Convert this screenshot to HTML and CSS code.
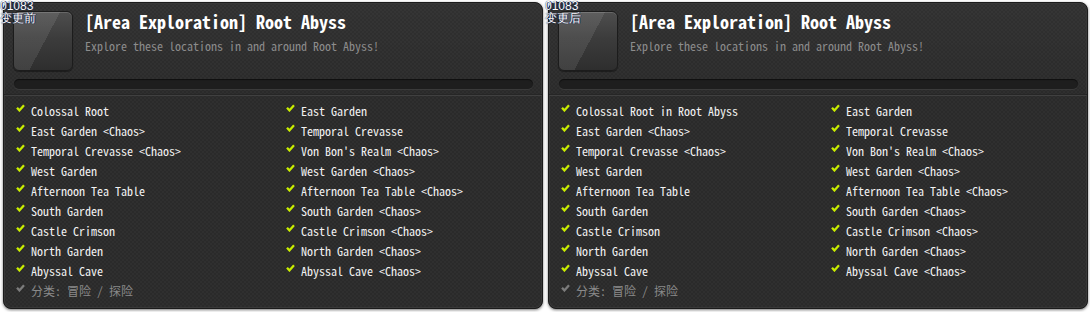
FILE: index.html
```html
<!DOCTYPE html>
<html>
<head>
<meta charset="utf-8">
<link rel="stylesheet" href="styles.css">
</head>
<body>
<div class="board">
  <div class="panel">
    <div class="tag"><div>01083</div><div>变更前</div></div>
    <div class="head">
      <div class="icon"></div>
      <div class="htext">
        <div class="title">[Area Exploration] Root Abyss</div>
        <div class="sub">Explore these locations in and around Root Abyss!</div>
      </div>
    </div>
    <div class="bar"></div>
    <div class="sep"></div>
    <ul class="list">
      <li><span class="chk"><svg viewBox="0 0 9 8" width="9" height="8"><polyline points="1,3.8 3.4,6.4 8,1.2"/></svg></span>Colossal Root</li>
      <li><span class="chk"><svg viewBox="0 0 9 8" width="9" height="8"><polyline points="1,3.8 3.4,6.4 8,1.2"/></svg></span>East Garden</li>
      <li><span class="chk"><svg viewBox="0 0 9 8" width="9" height="8"><polyline points="1,3.8 3.4,6.4 8,1.2"/></svg></span>East Garden &lt;Chaos&gt;</li>
      <li><span class="chk"><svg viewBox="0 0 9 8" width="9" height="8"><polyline points="1,3.8 3.4,6.4 8,1.2"/></svg></span>Temporal Crevasse</li>
      <li><span class="chk"><svg viewBox="0 0 9 8" width="9" height="8"><polyline points="1,3.8 3.4,6.4 8,1.2"/></svg></span>Temporal Crevasse &lt;Chaos&gt;</li>
      <li><span class="chk"><svg viewBox="0 0 9 8" width="9" height="8"><polyline points="1,3.8 3.4,6.4 8,1.2"/></svg></span>Von Bon's Realm &lt;Chaos&gt;</li>
      <li><span class="chk"><svg viewBox="0 0 9 8" width="9" height="8"><polyline points="1,3.8 3.4,6.4 8,1.2"/></svg></span>West Garden</li>
      <li><span class="chk"><svg viewBox="0 0 9 8" width="9" height="8"><polyline points="1,3.8 3.4,6.4 8,1.2"/></svg></span>West Garden &lt;Chaos&gt;</li>
      <li><span class="chk"><svg viewBox="0 0 9 8" width="9" height="8"><polyline points="1,3.8 3.4,6.4 8,1.2"/></svg></span>Afternoon Tea Table</li>
      <li><span class="chk"><svg viewBox="0 0 9 8" width="9" height="8"><polyline points="1,3.8 3.4,6.4 8,1.2"/></svg></span>Afternoon Tea Table &lt;Chaos&gt;</li>
      <li><span class="chk"><svg viewBox="0 0 9 8" width="9" height="8"><polyline points="1,3.8 3.4,6.4 8,1.2"/></svg></span>South Garden</li>
      <li><span class="chk"><svg viewBox="0 0 9 8" width="9" height="8"><polyline points="1,3.8 3.4,6.4 8,1.2"/></svg></span>South Garden &lt;Chaos&gt;</li>
      <li><span class="chk"><svg viewBox="0 0 9 8" width="9" height="8"><polyline points="1,3.8 3.4,6.4 8,1.2"/></svg></span>Castle Crimson</li>
      <li><span class="chk"><svg viewBox="0 0 9 8" width="9" height="8"><polyline points="1,3.8 3.4,6.4 8,1.2"/></svg></span>Castle Crimson &lt;Chaos&gt;</li>
      <li><span class="chk"><svg viewBox="0 0 9 8" width="9" height="8"><polyline points="1,3.8 3.4,6.4 8,1.2"/></svg></span>North Garden</li>
      <li><span class="chk"><svg viewBox="0 0 9 8" width="9" height="8"><polyline points="1,3.8 3.4,6.4 8,1.2"/></svg></span>North Garden &lt;Chaos&gt;</li>
      <li><span class="chk"><svg viewBox="0 0 9 8" width="9" height="8"><polyline points="1,3.8 3.4,6.4 8,1.2"/></svg></span>Abyssal Cave</li>
      <li><span class="chk"><svg viewBox="0 0 9 8" width="9" height="8"><polyline points="1,3.8 3.4,6.4 8,1.2"/></svg></span>Abyssal Cave &lt;Chaos&gt;</li>
      <li class="cat"><span class="chk"><svg viewBox="0 0 9 8" width="9" height="8"><polyline points="1,3.8 3.4,6.4 8,1.2"/></svg></span>分类: 冒险 / 探险</li>
    </ul>
  </div>
  <div class="panel">
    <div class="tag"><div>01083</div><div>变更后</div></div>
    <div class="head">
      <div class="icon"></div>
      <div class="htext">
        <div class="title">[Area Exploration] Root Abyss</div>
        <div class="sub">Explore these locations in and around Root Abyss!</div>
      </div>
    </div>
    <div class="bar"></div>
    <div class="sep"></div>
    <ul class="list">
      <li><span class="chk"><svg viewBox="0 0 9 8" width="9" height="8"><polyline points="1,3.8 3.4,6.4 8,1.2"/></svg></span>Colossal Root in Root Abyss</li>
      <li><span class="chk"><svg viewBox="0 0 9 8" width="9" height="8"><polyline points="1,3.8 3.4,6.4 8,1.2"/></svg></span>East Garden</li>
      <li><span class="chk"><svg viewBox="0 0 9 8" width="9" height="8"><polyline points="1,3.8 3.4,6.4 8,1.2"/></svg></span>East Garden &lt;Chaos&gt;</li>
      <li><span class="chk"><svg viewBox="0 0 9 8" width="9" height="8"><polyline points="1,3.8 3.4,6.4 8,1.2"/></svg></span>Temporal Crevasse</li>
      <li><span class="chk"><svg viewBox="0 0 9 8" width="9" height="8"><polyline points="1,3.8 3.4,6.4 8,1.2"/></svg></span>Temporal Crevasse &lt;Chaos&gt;</li>
      <li><span class="chk"><svg viewBox="0 0 9 8" width="9" height="8"><polyline points="1,3.8 3.4,6.4 8,1.2"/></svg></span>Von Bon's Realm &lt;Chaos&gt;</li>
      <li><span class="chk"><svg viewBox="0 0 9 8" width="9" height="8"><polyline points="1,3.8 3.4,6.4 8,1.2"/></svg></span>West Garden</li>
      <li><span class="chk"><svg viewBox="0 0 9 8" width="9" height="8"><polyline points="1,3.8 3.4,6.4 8,1.2"/></svg></span>West Garden &lt;Chaos&gt;</li>
      <li><span class="chk"><svg viewBox="0 0 9 8" width="9" height="8"><polyline points="1,3.8 3.4,6.4 8,1.2"/></svg></span>Afternoon Tea Table</li>
      <li><span class="chk"><svg viewBox="0 0 9 8" width="9" height="8"><polyline points="1,3.8 3.4,6.4 8,1.2"/></svg></span>Afternoon Tea Table &lt;Chaos&gt;</li>
      <li><span class="chk"><svg viewBox="0 0 9 8" width="9" height="8"><polyline points="1,3.8 3.4,6.4 8,1.2"/></svg></span>South Garden</li>
      <li><span class="chk"><svg viewBox="0 0 9 8" width="9" height="8"><polyline points="1,3.8 3.4,6.4 8,1.2"/></svg></span>South Garden &lt;Chaos&gt;</li>
      <li><span class="chk"><svg viewBox="0 0 9 8" width="9" height="8"><polyline points="1,3.8 3.4,6.4 8,1.2"/></svg></span>Castle Crimson</li>
      <li><span class="chk"><svg viewBox="0 0 9 8" width="9" height="8"><polyline points="1,3.8 3.4,6.4 8,1.2"/></svg></span>Castle Crimson &lt;Chaos&gt;</li>
      <li><span class="chk"><svg viewBox="0 0 9 8" width="9" height="8"><polyline points="1,3.8 3.4,6.4 8,1.2"/></svg></span>North Garden</li>
      <li><span class="chk"><svg viewBox="0 0 9 8" width="9" height="8"><polyline points="1,3.8 3.4,6.4 8,1.2"/></svg></span>North Garden &lt;Chaos&gt;</li>
      <li><span class="chk"><svg viewBox="0 0 9 8" width="9" height="8"><polyline points="1,3.8 3.4,6.4 8,1.2"/></svg></span>Abyssal Cave</li>
      <li><span class="chk"><svg viewBox="0 0 9 8" width="9" height="8"><polyline points="1,3.8 3.4,6.4 8,1.2"/></svg></span>Abyssal Cave &lt;Chaos&gt;</li>
      <li class="cat"><span class="chk"><svg viewBox="0 0 9 8" width="9" height="8"><polyline points="1,3.8 3.4,6.4 8,1.2"/></svg></span>分类: 冒险 / 探险</li>
    </ul>
  </div>
</div>
</body>
</html>
```

FILE: styles.css
```css
html, body {
  margin: 0;
  padding: 0;
  background: #ffffff;
}
body {
  width: 1090px;
  height: 312px;
  overflow: hidden;
}
.board {
  display: flex;
  gap: 5px;
  padding: 2px 0 0 3px;
}
.panel {
  position: relative;
  box-sizing: border-box;
  width: 540px;
  height: 307px;
  border: 1px solid #1b1b1b;
  border-radius: 8px;
  background-color: #2d2d2d;
  background-image:
    linear-gradient(180deg, rgba(255,255,255,0.03) 0%, rgba(255,255,255,0) 30%),
    repeating-conic-gradient(#2f2f2f 0 25%, #2a2a2a 0 50%);
  background-size: 100% 100%, 4px 4px;
  box-shadow: 0 1px 3px rgba(0,0,0,0.55), inset 0 0 0 1px #383838;
  font-family: "Noto Sans Mono CJK SC", "Noto Sans CJK SC", monospace;
  color: #f2f2f2;
}
.tag {
  position: absolute;
  left: -4px;
  top: -3px;
  font-family: "Liberation Sans", Arial, sans-serif;
  font-size: 12px;
  line-height: 12px;
  color: #ffffff;
  text-shadow: 0 0 1px #000, 1px 0 0 #1d3fa8;
  z-index: 2;
}
.tag div {
  height: 12px;
}
.head {
  display: flex;
  padding: 8px 0 0 9px;
}
.icon {
  box-sizing: border-box;
  width: 60px;
  height: 60px;
  border: 1px solid #1c1c1c;
  border-radius: 6px;
  background-image:
    linear-gradient(118deg, rgba(255,255,255,0.09) 0 52%, rgba(255,255,255,0) 52%),
    linear-gradient(180deg, #4e4e4e 0%, #3c3c3c 45%, #2e2e2e 100%);
  box-shadow: inset 0 1px 0 rgba(255,255,255,0.15), 0 1px 1px rgba(0,0,0,0.4);
}
.htext {
  margin-left: 12px;
}
.title {
  font-size: 18px;
  line-height: 20px;
  font-weight: bold;
  color: #ffffff;
  white-space: nowrap;
}
.sub {
  margin-top: 7px;
  font-size: 12px;
  line-height: 16px;
  color: #8c8c8c;
  white-space: nowrap;
}
.bar {
  height: 10px;
  margin: 8px 9px 0 10px;
  border-radius: 5px;
  background: #1e1e1e;
  box-shadow: 0 1px 0 #3a3a3a, inset 0 1px 1px rgba(0,0,0,0.5);
}
.sep {
  height: 1px;
  margin-top: 5px;
  background: #404040;
  border-top: 1px solid #262626;
}
.list {
  list-style: none;
  margin: 0;
  padding: 5px 0 0 12px;
  display: grid;
  grid-template-columns: 270px 1fr;
}
.list li {
  display: flex;
  align-items: center;
  height: 20px;
  font-size: 12px;
  line-height: 20px;
  white-space: nowrap;
}
.chk {
  display: inline-flex;
  width: 15px;
  height: 20px;
  align-items: flex-start;
  padding-top: 3px;
  box-sizing: border-box;
}
.chk svg {
  fill: none;
  stroke: #c9ec00;
  stroke-width: 2.3;
  stroke-linecap: butt;
  stroke-linejoin: miter;
}
.list li.cat {
  grid-column: 1 / span 2;
  color: #8a8a8a;
}
.list li.cat .chk svg {
  stroke: #7c7c7c;
}
```
